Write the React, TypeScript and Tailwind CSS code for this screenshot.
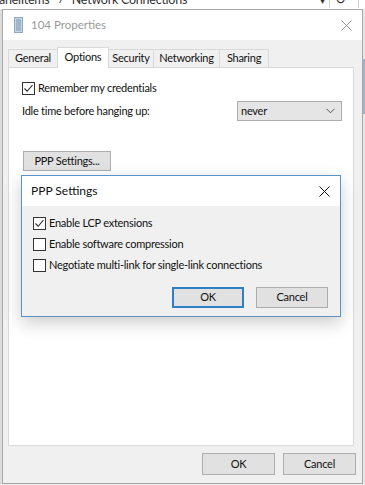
import React from 'react';

const Checkbox = ({ checked }: { checked?: boolean }) => (
  <span className="flex h-[13px] w-[13px] shrink-0 items-center justify-center border border-[#333333] bg-white">
    {checked && (
      <svg width="11" height="11" viewBox="0 0 11 11">
        <path d="M1.5 5.5 L4.2 8.3 L9.5 2" fill="none" stroke="#222" strokeWidth="1.1" />
      </svg>
    )}
  </span>
);

const Button = ({ label, focused, className = '' }: { label: string; focused?: boolean; className?: string }) => (
  <div
    className={`flex items-center justify-center bg-[#e1e1e1] text-[#111] ${
      focused ? 'border-2 border-[#2f7fc6]' : 'border border-[#adadad]'
    } ${className}`}
  >
    {label}
  </div>
);

const CloseX = ({ color }: { color: string }) => (
  <svg width="11" height="11" viewBox="0 0 11 11">
    <path d="M0.5 0.5 L10.5 10.5 M10.5 0.5 L0.5 10.5" stroke={color} strokeWidth="1" fill="none" />
  </svg>
);

const tabs = [
  { label: 'General', w: 'w-[50px]' },
  { label: 'Options', w: 'w-[52px]', active: true },
  { label: 'Security', w: 'w-[46px]' },
  { label: 'Networking', w: 'w-[67px]' },
  { label: 'Sharing', w: 'w-[50px]' },
];

export default function App() {
  return (
    <div className="relative h-[485px] w-[365px] overflow-hidden bg-[#ececec] font-['Lato',sans-serif] text-[11px] tracking-[-0.25px] text-[#111]">
      {/* explorer window behind, only the bottom of its address bar shows */}
      <div className="flex h-[9px] overflow-hidden bg-white text-[12.5px] leading-[16px] text-[#333]">
        <div className="-mt-[8px] flex w-full items-start">
          <span className="-ml-[1px]">anelItems</span>
          <span className="ml-[9px]">›</span>
          <span className="ml-[10px]">Network Connections</span>
          <span className="ml-auto text-[10px]">▾</span>
          <span className="ml-[5px] h-[16px] border-l border-[#d0d0d0]" />
          <span className="ml-[5px]">↻</span>
          <span className="ml-[12px] mr-[6px] h-[16px] border-l border-[#d0d0d0]" />
        </div>
      </div>

      <div className="flex">
        <div className="w-[2px] bg-[#dcdcdc]" />

        {/* 104 Properties window */}
        <div className="flex h-[475px] w-[361px] flex-col border border-[#a8a8a8]">
          <div className="flex h-[30px] items-center bg-white">
            <svg width="9" height="16" viewBox="0 0 9 16" className="ml-[11px]">
              <rect x="0.5" y="0.5" width="8" height="15" fill="#c7d6e6" stroke="#8fa7c0" />
              <path d="M2 3 H7 M2 5 H7 M2 7 H7 M2 9 H7 M2 11 H7 M2 13 H7" stroke="#7d95b0" strokeWidth="1" />
            </svg>
            <span className="ml-[8px] text-[11.5px] tracking-normal text-[#9a9a9a]">104 Properties</span>
            <span className="ml-auto mr-[10px]">
              <CloseX color="#9a9a9a" />
            </span>
          </div>

          <div className="flex flex-1 flex-col bg-[#f0f0f0] pl-[5px] pr-[8px]">
            {/* tabs */}
            <div className="mt-[7px] flex h-[20px] items-end">
              {tabs.map((t, i) => (
                <div
                  key={t.label}
                  className={`flex items-center justify-center border border-b-0 border-[#d9d9d9] ${t.w} ${
                    i > 0 ? '-ml-[1px]' : ''
                  } ${t.active ? 'relative z-10 -mb-[1px] h-[21px] bg-white pb-[2px]' : 'h-[18px] bg-[#f0f0f0]'}`}
                >
                  {t.label}
                </div>
              ))}
            </div>

            {/* options panel */}
            <div className="flex h-[379px] flex-col border border-[#d9d9d9] bg-white pl-[13px] pr-[11px]">
              <div className="mt-[12px] flex h-[16px] items-center gap-[3px]">
                <Checkbox checked />
                <span>Remember my credentials</span>
              </div>
              <div className="mt-[5px] flex h-[20px] items-center justify-between">
                <span>Idle time before hanging up:</span>
                <div className="flex h-[20px] w-[105px] items-center justify-between border border-[#acacac] bg-[#e5e5e5] pl-[3px] pr-[6px]">
                  <span>never</span>
                  <svg width="9" height="6" viewBox="0 0 9 6">
                    <path d="M0.5 0.8 L4.5 4.8 L8.5 0.8" fill="none" stroke="#555" strokeWidth="1" />
                  </svg>
                </div>
              </div>
              <Button label="PPP Settings..." className="ml-[1px] mt-[30px] h-[20px] w-[88px]" />
            </div>

            <div className="mt-[7px] flex justify-end gap-[8px]">
              <Button label="OK" className="h-[22px] w-[73px]" />
              <Button label="Cancel" className="-mr-[2px] h-[22px] w-[73px]" />
            </div>
          </div>
        </div>

        <div className="flex flex-1 flex-col bg-[#e6e6e6]">
          <div className="mt-[50px] h-[55px] bg-[#9db3cc]" />
        </div>
      </div>

      {/* PPP Settings dialog, lies over the Options page */}
      <div className="absolute left-[21px] top-[175px] flex h-[142px] w-[320px] flex-col border border-[#5a93c9] shadow-[0_6px_16px_rgba(0,0,0,0.2)]">
        <div className="flex h-[30px] items-center bg-white pl-[9px] pr-[10px] text-[12px] tracking-normal">
          <span>PPP Settings</span>
          <span className="ml-auto">
            <CloseX color="#111" />
          </span>
        </div>
        <div className="flex flex-1 flex-col bg-[#f0f0f0] pl-[11px] pr-[12px]">
          <div className="mt-[7px] flex h-[21px] items-center gap-[3px]">
            <Checkbox checked />
            <span>Enable LCP extensions</span>
          </div>
          <div className="flex h-[21px] items-center gap-[3px]">
            <Checkbox />
            <span>Enable software compression</span>
          </div>
          <div className="flex h-[21px] items-center gap-[3px]">
            <Checkbox />
            <span>Negotiate multi-link for single-link connections</span>
          </div>
          <div className="mt-[11px] flex justify-end gap-[12px]">
            <Button label="OK" focused className="h-[21px] w-[72px]" />
            <Button label="Cancel" className="h-[21px] w-[72px]" />
          </div>
        </div>
      </div>
    </div>
  );
}
